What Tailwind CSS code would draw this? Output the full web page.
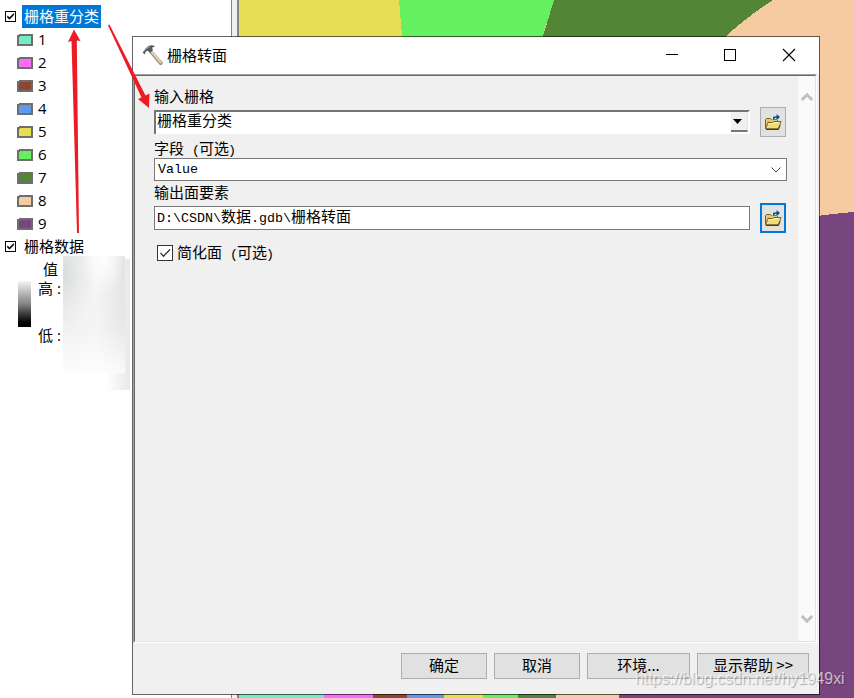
<!DOCTYPE html>
<html lang="zh-CN">
<head>
<meta charset="utf-8">
<title>栅格转面</title>
<script src="https://cdn.jsdelivr.net/npm/@tailwindcss/browser@4"></script>
</head>
<body class="bg-white">
<svg class="hidden">
  <symbol id="folder" viewBox="0 0 18 18">
    <path d="M1.500 15.500V6.500l1-1h4l1 1h6v3" fill="#e3c76c" stroke="#7a5e1c"/>
    <path d="M1.500 15.700 4 9.500h4.500l1-1h7.500L14.500 15.700z" fill="#f1da7e" stroke="#7a5e1c"/>
    <path d="M2 16.500h12.500l1.500-4" fill="none" stroke="#4f3a08"/>
    <path d="M4.700 10.700h4l1-1h5.500" fill="none" stroke="#fff5b8"/>
    <path d="M8 6.500V3h4V.5l4.500 3.500L12.500 8V6z" fill="#e5f3ff"/>
    <path d="M9 6.500V3.500h3.500V1l3.500 3-3.500 3.200V5H10.500v1.500z" fill="#064a87"/>
  </symbol>
  <symbol id="check" viewBox="0 0 11 11">
    <rect x=".5" y=".5" width="10" height="10" fill="#fff" stroke="#000"/>
    <path d="M2.500 5v1.500L4.500 8.300 8.700 4V2.500L4.500 6.500z" fill="#000" stroke="#000" stroke-width=".6"/>
  </symbol>
  <symbol id="swatch" viewBox="0 0 16 12">
    <path d="M0 1h2V0h14v12H0z" fill="#6e6e6e" shape-rendering="crispEdges"/>
    <path d="M2 3h1V2h11v8H2z" fill="currentColor" shape-rendering="crispEdges"/>
  </symbol>
</svg>
<div class="relative flex h-[698px] w-[854px] overflow-hidden bg-white text-[15px] text-black">

  <!-- layer list -->
  <aside class="w-[231px] shrink-0 pt-[5px] font-['Open_Sans','Noto_Sans_CJK_SC',sans-serif] leading-[23px]">
    <div class="flex h-[23px] items-center pl-[5px]">
      <svg class="h-[11px] w-[11px]"><use href="#check"/></svg>
      <span class="ml-[6px] h-[23px] w-[79px] bg-[#0078d7] pl-[2px] leading-[22px] whitespace-nowrap text-white">栅格重分类</span>
    </div>
    <ul class="pl-[17px]">
      <li class="flex h-[23px] items-center gap-[5px]"><svg class="h-3 w-4 text-[#73ecc2]"><use href="#swatch"/></svg>1</li>
      <li class="flex h-[23px] items-center gap-[5px]"><svg class="h-3 w-4 text-[#fa6bfb]"><use href="#swatch"/></svg>2</li>
      <li class="flex h-[23px] items-center gap-[5px]"><svg class="h-3 w-4 text-[#8c4732]"><use href="#swatch"/></svg>3</li>
      <li class="flex h-[23px] items-center gap-[5px]"><svg class="h-3 w-4 text-[#5c9aec]"><use href="#swatch"/></svg>4</li>
      <li class="flex h-[23px] items-center gap-[5px]"><svg class="h-3 w-4 text-[#e6df55]"><use href="#swatch"/></svg>5</li>
      <li class="flex h-[23px] items-center gap-[5px]"><svg class="h-3 w-4 text-[#64f05f]"><use href="#swatch"/></svg>6</li>
      <li class="flex h-[23px] items-center gap-[5px]"><svg class="h-3 w-4 text-[#528535]"><use href="#swatch"/></svg>7</li>
      <li class="flex h-[23px] items-center gap-[5px]"><svg class="h-3 w-4 text-[#f7cba2]"><use href="#swatch"/></svg>8</li>
      <li class="flex h-[23px] items-center gap-[5px]"><svg class="h-3 w-4 text-[#78467f]"><use href="#swatch"/></svg>9</li>
    </ul>
    <div class="flex h-[21px] items-start pl-[5px]">
      <svg class="mt-[6px] h-[11px] w-[11px]"><use href="#check"/></svg>
      <span class="ml-[8px] leading-[23px]">栅格数据</span>
    </div>
    <div class="flex">
      <div class="w-[63px] pl-[18px]">
        <div class="h-[20px] pl-[25px] leading-[26px]">值</div>
        <div class="flex gap-[7px] pt-[3px]">
          <div class="mt-[2px] h-[46px] w-[13px] bg-linear-to-b from-[#f4f4f4] via-[#858585] to-black"></div>
          <div class="flex h-[66px] flex-col justify-between whitespace-nowrap">
            <span class="leading-[19px]">高 :</span>
            <span class="leading-[20px]">低 :</span>
          </div>
        </div>
      </div>
      <svg class="h-[134px] w-[67px]" viewBox="0 0 67 134">
        <defs>
          <linearGradient id="fogA" x1="0" y1="0" x2="1" y2="0"><stop offset="0" stop-color="#ededed"/><stop offset=".55" stop-color="#f2f2f2"/><stop offset="1" stop-color="#e0e0e0"/></linearGradient>
          <linearGradient id="fogB" x1="0" y1="0" x2="0" y2="1"><stop offset="0" stop-color="#fff" stop-opacity=".1"/><stop offset=".6" stop-color="#fff" stop-opacity=".2"/><stop offset="1" stop-color="#fff" stop-opacity=".85"/></linearGradient>
          <linearGradient id="fogC" x1="0" y1="0" x2="1" y2="0"><stop offset=".65" stop-color="#fff"/><stop offset="1" stop-color="#e8e8e8"/></linearGradient>
          <radialGradient id="fogD" cx="0" cy=".15" r=".5"><stop offset="0" stop-color="#d9dcdc"/><stop offset="1" stop-color="#e6e6e6" stop-opacity="0"/></radialGradient>
          <radialGradient id="fogE" cx=".65" cy="0" r=".35"><stop offset="0" stop-color="#fff"/><stop offset="1" stop-color="#fff" stop-opacity="0"/></radialGradient>
        </defs>
        <rect x="0" y="3" width="67" height="131" fill="url(#fogC)"/>
        <rect width="62" height="117" fill="url(#fogA)"/>
        <rect width="62" height="117" fill="url(#fogB)"/>
        <rect width="62" height="117" fill="url(#fogD)"/>
        <rect width="62" height="117" fill="url(#fogE)"/>
      </svg>
    </div>
  </aside>

  <!-- splitter -->
  <div class="w-[8px] shrink-0 border-r-2 border-l border-r-[#858585] border-l-[#808890] bg-[#f0f0f0]"></div>

  <!-- map -->
  <svg class="h-[698px] w-[615px] shrink-0" viewBox="239 0 615 698" shape-rendering="crispEdges">
    <rect x="239" y="0" width="615" height="698" fill="#f7cba2"/>
    <path d="M239 0h160l3 36v10H239z" fill="#e6df55"/>
    <path d="M399 0h155l-12 38v8H402V36z" fill="#64f05f"/>
    <path d="M554 0h219Q748 16 725 37v9H540z" fill="#528535"/>
    <path d="M810 217Q830 214 854 212V698H619V690H810z" fill="#78467f"/>
    <path d="M239 690h85v8h-85z" fill="#73ecc2"/>
    <path d="M324 690h49v8h-49z" fill="#fa6bfb"/>
    <path d="M373 690h34v8h-34z" fill="#8c4732"/>
    <path d="M407 690h37v8h-37z" fill="#5c9aec"/>
    <path d="M444 690h39v8h-39z" fill="#e6df55"/>
    <path d="M483 690h35v8h-35z" fill="#64f05f"/>
    <path d="M518 690h37l1 8h-38z" fill="#528535"/>
  </svg>

  <!-- tool window -->
  <section class="absolute top-[36px] left-[132px] flex h-[659px] w-[688px] flex-col border border-black/60 bg-[#f0f0f0] bg-clip-padding font-['Liberation_Mono','Noto_Sans_CJK_SC',monospace]">
    <header class="flex h-[37px] shrink-0 items-center bg-white pl-[9px] font-['Open_Sans','Noto_Sans_CJK_SC',sans-serif]">
      <svg class="mb-px h-[22px] w-[22px]" viewBox="0 0 22 22">
        <path d="M9 6 20.500 18.500Q20.500 21 18 20.800L7.500 8z" fill="#b9aa91" stroke="#86765f" stroke-width=".7"/>
        <path d="M9.500 7.500 19 18.500" stroke="#e9dfcc" stroke-width="1.300"/>
        <path d="M.8 8.500 3.500 4.500 6.500 2Q10 .5 13 2.200L10 3.700 11 6 8 9 6 6.800 4 7.500 2.500 10.500z" fill="#545a5c"/>
        <path d="M1.500 8 4.500 4.500 8 2.800" fill="none" stroke="#9ba2a3"/>
      </svg>
      <h1 class="ml-[3px] text-[15px]">栅格转面</h1>
      <svg class="mr-[23px] mb-px ml-auto h-[14px] w-[131px]" viewBox="0 0 131 14" fill="none" stroke="#000">
        <path d="M1 6.500h12M59.500 1.500h11v11h-11z" shape-rendering="crispEdges"/>
        <path d="m118 1 12 12m0-12-12 12" stroke-width="1.100"/>
      </svg>
    </header>

    <div class="mr-[2px] h-[569px] shrink-0 border border-t-[#a0a0a0] border-r-white border-b-white border-l-[#a0a0a0]">
      <div class="flex h-full border border-t-[#696969] border-r-[#e3e3e3] border-b-[#e3e3e3] border-l-[#696969]">
      <form class="w-[663px] pt-[10px] pl-[19px]">
        <div class="h-[21px] leading-[26px]">输入栅格</div>
        <div class="flex h-[30px] items-center gap-[10px]">
          <div class="flex h-[24px] w-[596px] border-t-2 border-r-2 border-l-2 border-t-[#757575] border-r-white border-l-[#757575] bg-white">
            <span class="flex-1 pl-px leading-[21px]">栅格重分类</span>
            <span class="flex h-[20px] w-[17px] items-center justify-center border-r border-b-2 border-r-[#e3e3e3] border-b-[#777] bg-[#f0f0f0] pr-[3px]"><svg class="h-[5px] w-[9px]" viewBox="0 0 9 5"><path d="M0 0h9L4.500 5z"/></svg></span>
          </div>
          <button type="button" class="flex h-[30px] w-[26px] items-center justify-center border border-[#adadad] bg-[#e1e1e1]"><svg class="h-[18px] w-[18px]"><use href="#folder"/></svg></button>
        </div>
        <div class="h-[21px] leading-[28px]">字段<span class="text-[13.33px]">&nbsp;(</span><span class="-ml-px">可选</span><span class="-ml-px text-[13.33px]">)</span></div>
        <div class="flex h-[23px] w-[633px] items-center justify-between border border-[#7a7a7a] bg-white pr-[5px] pl-[3px]">
          <span class="text-[13.33px] leading-[21px]">Value</span>
          <svg class="h-[6px] w-[10px]" viewBox="0 0 10 6" fill="none" stroke="#444"><path d="m.5.5 4.500 4.500L9.500.5"/></svg>
        </div>
        <div class="h-[22px] leading-[28px]">输出面要素</div>
        <div class="flex h-[30px] items-center gap-[10px]">
          <div class="h-[24px] w-[596px] border border-[#7a7a7a] bg-white pl-[2px] leading-[23px] whitespace-nowrap"><span class="text-[13.33px]">D:\CSDN\</span>数据<span class="text-[13.33px]">.gdb\</span>栅格转面</div>
          <button type="button" class="flex h-[30px] w-[26px] items-center justify-center border-2 border-[#0078d7] bg-[#e1e1e1]"><svg class="h-[18px] w-[18px]"><use href="#folder"/></svg></button>
        </div>
        <div class="mt-[10px] flex h-[20px] items-center gap-[4px] pl-[3px]">
          <svg class="h-4 w-4" viewBox="0 0 16 16"><rect x=".5" y=".5" width="15" height="15" fill="#fff" stroke="#333"/><path d="m3.500 8 3 3.200L13 4.500" fill="none" stroke="#333" stroke-width="1.300"/></svg>
          <span class="pt-[3px] leading-[20px]">简化面<span class="text-[13.33px]">&nbsp;(</span><span class="-ml-px">可选</span><span class="-ml-px text-[13.33px]">)</span></span>
        </div>
      </form>
      <div class="flex flex-1 flex-col items-center justify-between bg-[#fafafa] pt-[16px] pb-[17px]">
        <svg class="h-[10px] w-[12px]" viewBox="0 0 12 10" fill="none" stroke="#bfbfbf" stroke-width="2.800"><path d="M.8 8 6 2.700 11.200 8"/></svg>
        <svg class="h-[10px] w-[12px]" viewBox="0 0 12 10" fill="none" stroke="#bfbfbf" stroke-width="2.800"><path d="M.8 2 6 7.300 11.200 2"/></svg>
      </div>
      </div>
    </div>

    <footer class="flex justify-end gap-[7px] pt-[10px] pr-[10px] font-['Noto_Sans_CJK_SC',sans-serif] leading-[22px]">
      <button type="button" class="h-[26px] w-[86px] border border-[#adadad] bg-[#e1e1e1] pb-[2px]">确定</button>
      <button type="button" class="h-[26px] w-[86px] border border-[#adadad] bg-[#e1e1e1] pb-[2px]">取消</button>
      <button type="button" class="h-[26px] w-[103px] border border-[#adadad] bg-[#e1e1e1] pb-[2px]">环境...</button>
      <button type="button" class="h-[26px] w-[112px] border border-[#adadad] bg-[#e1e1e1] pb-[2px]">显示帮助 &gt;&gt;</button>
    </footer>
  </section>

  <!-- annotation arrows -->
  <svg class="pointer-events-none absolute top-0 left-0 h-[240px] w-[160px]" viewBox="0 0 160 240" fill="#ed1c24">
    <path d="M77 233 71.500 41 68 42 74 29.500 80.500 41 76.800 40.500 79 233z"/>
    <path d="M108 25.500 109.500 24.500 145.500 95.500 149.500 93.500 149 108 138 99 141.500 97.500z"/>
  </svg>

  <div class="absolute top-[669px] left-[635px] font-['Liberation_Sans',sans-serif] text-[15.85px] leading-[20px] whitespace-nowrap text-white/65 [text-shadow:1px_1px_1px_rgb(0_0_0/0.3)]">https://blog.csdn.net/hy1949xi</div>
</div>
</body>
</html>
